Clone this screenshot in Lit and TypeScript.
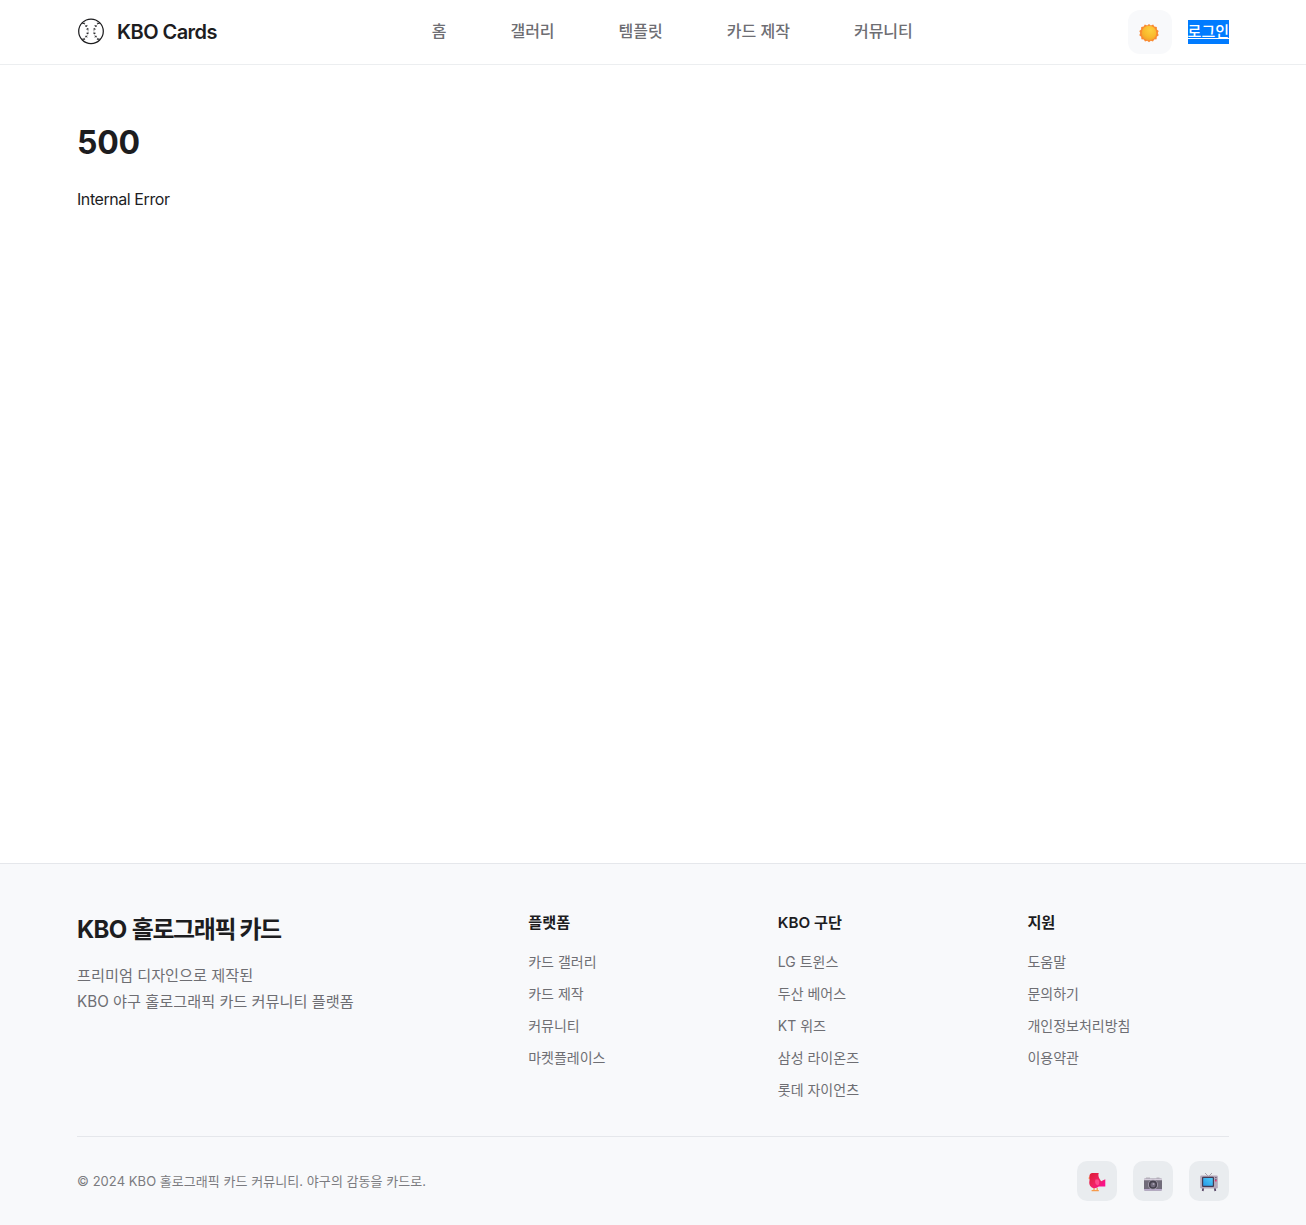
import { LitElement, html, css } from "lit";
import { customElement } from "lit/decorators.js";

const NAV = ["홈", "갤러리", "템플릿", "카드 제작", "커뮤니티"];
const COLUMNS = [
  { title: "플랫폼", links: ["카드 갤러리", "카드 제작", "커뮤니티", "마켓플레이스"] },
  { title: "KBO 구단", links: ["LG 트윈스", "두산 베어스", "KT 위즈", "삼성 라이온즈", "롯데 자이언츠"] },
  { title: "지원", links: ["도움말", "문의하기", "개인정보처리방침", "이용약관"] },
];

const ballIcon = html`<svg width="28" height="28" viewBox="0 0 28 28" fill="none" stroke="#1d1d1f">
  <circle cx="14" cy="14.3" r="12.3" stroke-width="1.25"/>
  <path d="M5.4 5.8C13 9.5 13 19 5.4 22.8M22.6 5.8C15 9.5 15 19 22.6 22.8" stroke-width=".7" stroke-dasharray="2.6 1.1"/>
  <path d="M5.3 6.6l2.8-.4M8.2 9.4l2.2-.9M9.4 12.2l2-.4M9.4 16.2l2 .4M8.2 19.2l2.2.9M5.3 22l2.8.4M22.7 6.6l-2.8-.4M19.8 9.4l-2.2-.9M18.6 12.2l-2-.4M18.6 16.2l-2 .4M19.8 19.2l-2.2.9M22.7 22l-2.8.4" stroke-width=".9"/>
</svg>`;

const sunIcon = html`<svg width="20" height="20" viewBox="0 0 20 20">
  <defs><radialGradient id="sun" cx=".6" cy=".3" r=".8"><stop offset="0" stop-color="#fdd03e"/><stop offset=".6" stop-color="#f9b92d"/><stop offset="1" stop-color="#f29b2b"/></radialGradient></defs>
  <path fill="#f98a31" d="M10 1l1.8 1.5 2.4-.9 1.1 2 2.5.4.1 2.4 1.8 1.6-.9 2.1.9 2.2-1.9 1.5-.2 2.4-2.4.3-1.2 2-2.2-.7L10 19.3l-1.8-1.5-2.2.7-1.2-2-2.4-.3-.2-2.4-1.9-1.5.9-2.2-.9-2.1 1.8-1.6.1-2.4 2.5-.4 1.1-2 2.4.9z"/>
  <circle cx="10" cy="10" r="7.3" fill="url(#sun)"/>
</svg>`;

const birdIcon = html`<svg width="18" height="20" viewBox="0 0 18 20">
  <defs><linearGradient id="bird" x1="0" y1="0" x2="1" y2="1"><stop offset="0" stop-color="#dc1b35"/><stop offset=".5" stop-color="#ef2360"/><stop offset="1" stop-color="#ff08a0"/></linearGradient></defs>
  <path d="M2 4L.2 6.2 2 7.2z" fill="#f9a04a"/>
  <path d="M6 16v2.2M9.2 16v2.2M3.6 18.6h4M7.4 18.6h3.4" stroke="#f79a4b" stroke-width="1.2"/>
  <path d="M4.2 1h6.6c-.7 1.2-.4 3.2.3 5l2 3.2 4.2-1.9v7.3H10.7c-2 1.8-5.2 2.2-7.2.7C1 13.400 1 11 1.500 8.500V3.600C1.800 2 2.800 1 4.200 1z" fill="url(#bird)"/>
  <path d="M7.500 7.400c-.9 2.700-.3 5 2.300 6.200 1.700-1.400 2-4.200.4-6.200z" fill="#ff4a8e"/>
</svg>`;

const cameraIcon = html`<svg width="20" height="16" viewBox="0 0 20 16">
  <path d="M3 1.600h4v2H3zM13.500 1.600h3v2h-3z" fill="#b5b0ba"/>
  <rect x="1" y="2.500" width="18" height="12" rx="1.200" fill="#716c7a"/>
  <path d="M1 4.300V3.500q0-1 1-1h16q1 0 1 1v.8z" fill="#d5cddb"/>
  <path d="M1 13h18v.7q0 .9-1 .9H2q-1 0-1-.9z" fill="#b9a9cb"/>
  <circle cx="10" cy="8.700" r="5" fill="#a59eae"/><circle cx="10" cy="8.700" r="4.100" fill="#45404d"/>
  <circle cx="10" cy="8.700" r="2.500" fill="#716b7c"/><circle cx="10.500" cy="8" r="1" fill="#aaa3b5"/>
</svg>`;

const tvIcon = html`<svg width="20" height="20" viewBox="0 0 20 20">
  <defs><linearGradient id="screen" x1="0" y1="1" x2="1" y2="0"><stop offset="0" stop-color="#2699e8"/><stop offset="1" stop-color="#52cdf8"/></linearGradient></defs>
  <path d="M6 1l3 3M13 1l-3 3" stroke="#a9a2ac" stroke-width="1"/>
  <path d="M4.200 16l-.5 3M15.800 16l.5 3" stroke="#594867" stroke-width="1.800"/>
  <rect x="1.200" y="3.500" width="17.600" height="13" rx="1.300" fill="#b5a8ba"/>
  <rect x="3" y="4.800" width="12" height="10.200" rx="1" fill="#453b54"/>
  <rect x="4.200" y="6" width="9.600" height="7.800" rx=".5" fill="url(#screen)"/>
  <path d="M16 5.500h1.700M16 7.400h1.700" stroke="#72647e" stroke-width="1"/>
  <circle cx="16.800" cy="8.700" r=".9" fill="#e7356f"/>
</svg>`;

@customElement("app-root")
class AppRoot extends LitElement {
  static styles = css`
    :host { display: flex; flex-direction: column; height: 1225px; background: #fff; color: #1d1d1f;
      font-family: Inter, "Noto Sans CJK KR", sans-serif; font-size: 16px; line-height: 24px; }
    * { box-sizing: border-box; }
    svg { display: block; }
    header { height: 65px; border-bottom: 1px solid #eceef0; padding: 0 77px; display: flex; align-items: center; justify-content: space-between; }
    .brand { display: flex; align-items: center; gap: 12px; font-size: 20px; font-weight: 600; letter-spacing: -0.55px; }
    .brand svg { margin-top: -2px; }
    nav { display: flex; gap: 64px; color: #6e6e73; font-weight: 500; padding-bottom: 2px; }
    .actions { display: flex; gap: 16px; align-items: center; }
    .theme { width: 44px; height: 44px; border-radius: 12px; background: #f8f9fb; display: grid; place-items: center; }
    .theme svg { margin: 1px 2px 0 0; }
    .login { background: #007bff; color: #fff; text-decoration: underline; font-size: 15px; font-weight: 500; }
    main { flex: 1; padding: 54px 77px; }
    h1 { font-size: 32px; line-height: 48px; margin: 0 0 20px; letter-spacing: -0.3px; }
    p { margin: 0; }
    .error { letter-spacing: -0.43px; }
    footer { height: 362px; background: #f8f9fb; border-top: 1px solid #e5e7eb; padding: 48px 77px 24px; }
    .cols { display: grid; grid-template-columns: 2fr 1fr 1fr 1fr; gap: 48px; height: 224px; }
    h2 { font-size: 24px; line-height: 36px; margin: 0 0 15px; letter-spacing: -1.4px; }
    h2 span { letter-spacing: -0.65px; }
    .desc { font-size: 15.2px; line-height: 26px; color: #6e6e73; }
    h3 { font-size: 15.2px; line-height: 22px; margin: 0 0 18px; font-weight: 600; color: #1d1d1f; }
    .links { display: flex; flex-direction: column; font-size: 14px; color: #6e6e73; }
    .links a { line-height: 20px; margin-bottom: 12px; }
    .bottom { border-top: 1px solid #e5e7eb; padding-top: 24px; display: flex; justify-content: space-between; align-items: center; font-size: 13px; letter-spacing: 0.05px; color: #7b7b80; }
    .social { display: flex; gap: 16px; }
    .social span { width: 40px; height: 40px; border-radius: 10px; background: #e9ecef; display: grid; place-items: center; }
    .social svg { margin-top: 2px; }
    .social .camera svg { margin-top: 6px; }
  `;
  render() {
    return html`<header><div class="brand">${ballIcon}<span>KBO Cards</span></div><nav>${NAV.map((n) => html`<a>${n}</a>`)}</nav>
      <div class="actions"><span class="theme">${sunIcon}</span><a class="login">로그인</a></div></header>
      <main><h1>500</h1><p class="error">Internal Error</p></main>
      <footer><div class="cols"><div><h2><span>KBO </span>홀로그래픽 카드</h2><p class="desc">프리미엄 디자인으로 제작된<br>KBO 야구 홀로그래픽 카드 커뮤니티 플랫폼</p></div>
      ${COLUMNS.map((c) => html`<div class="links"><h3>${c.title}</h3>${c.links.map((l) => html`<a>${l}</a>`)}</div>`)}</div>
      <div class="bottom"><span>© 2024 KBO 홀로그래픽 카드 커뮤니티. 야구의 감동을 카드로.</span>
      <div class="social"><span>${birdIcon}</span><span class="camera">${cameraIcon}</span><span>${tvIcon}</span></div></div></footer>`;
  }
}
